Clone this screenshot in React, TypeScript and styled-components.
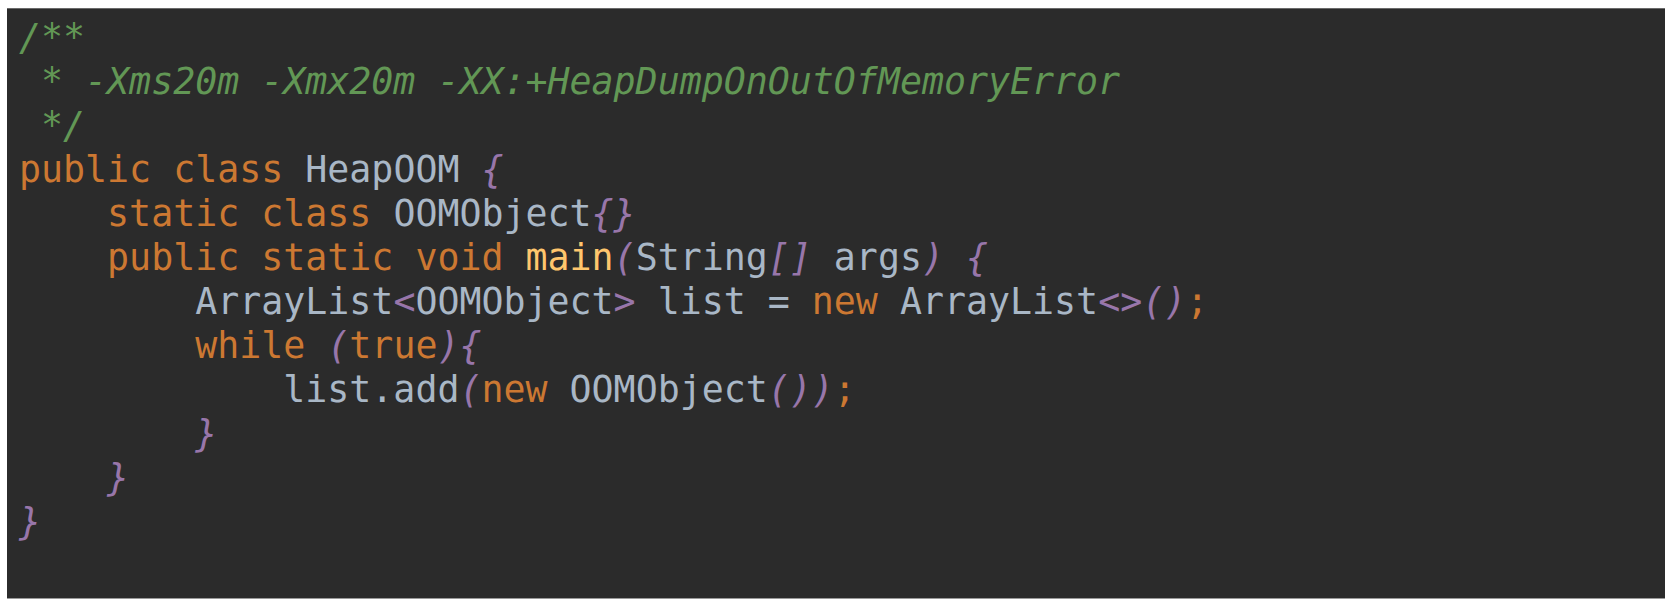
import React from "react";
import styled, { createGlobalStyle } from "styled-components";

const Global = createGlobalStyle`
  html, body { margin: 0; padding: 0; background: #ffffff; }
  #root { padding: 8px 7px 8px 7px; }
`;

const Panel = styled.div`
  box-sizing: border-box;
  width: 1658px;
  height: 591px;
  background: #2b2b2b;
  border-top: 1px solid #6a6a6a;
  border-bottom: 1px solid #9a9a9a;
  padding: 7px 0 0 12px;
  font-family: "DejaVu Sans Mono", "Liberation Mono", monospace;
  font-size: 36.6px;
  line-height: 44px;
  color: #a9b7c6;
  white-space: pre;
`;

const Line = styled.div`
  height: 44px;
`;

type Kind = "kw" | "id" | "cm" | "br" | "fn" | "pn";

const colors: Record<Kind, string> = {
  kw: "#cc7832",
  id: "#a9b7c6",
  cm: "#629755",
  br: "#9876aa",
  fn: "#ffc66d",
  pn: "#cc7832",
};

const Tok = styled.span<{ $k: Kind }>`
  color: ${(p) => colors[p.$k]};
  font-style: ${(p) => (p.$k === "cm" || p.$k === "br" ? "italic" : "normal")};
`;

const code: [Kind, string][][] = [
  [["cm", "/**"]],
  [["cm", " * -Xms20m -Xmx20m -XX:+HeapDumpOnOutOfMemoryError"]],
  [["cm", " */"]],
  [["kw", "public class "], ["id", "HeapOOM "], ["br", "{"]],
  [["kw", "    static class "], ["id", "OOMObject"], ["br", "{}"]],
  [
    ["kw", "    public static void "],
    ["fn", "main"],
    ["br", "("],
    ["id", "String"],
    ["br", "[]"],
    ["id", " args"],
    ["br", ")"],
    ["id", " "],
    ["br", "{"],
  ],
  [
    ["id", "        ArrayList"],
    ["br", "<"],
    ["id", "OOMObject"],
    ["br", ">"],
    ["id", " list = "],
    ["kw", "new "],
    ["id", "ArrayList"],
    ["br", "<>()"],
    ["pn", ";"],
  ],
  [["kw", "        while "], ["br", "("], ["kw", "true"], ["br", "){"]],
  [
    ["id", "            list.add"],
    ["br", "("],
    ["kw", "new "],
    ["id", "OOMObject"],
    ["br", "())"],
    ["pn", ";"],
  ],
  [["id", "        "], ["br", "}"]],
  [["id", "    "], ["br", "}"]],
  [["br", "}"]],
];

export default function App() {
  return (
    <>
      <Global />
      <Panel>
        {code.map((line, i) => (
          <Line key={i}>
            {line.map(([k, t], j) => (
              <Tok key={j} $k={k}>
                {t}
              </Tok>
            ))}
          </Line>
        ))}
      </Panel>
    </>
  );
}
